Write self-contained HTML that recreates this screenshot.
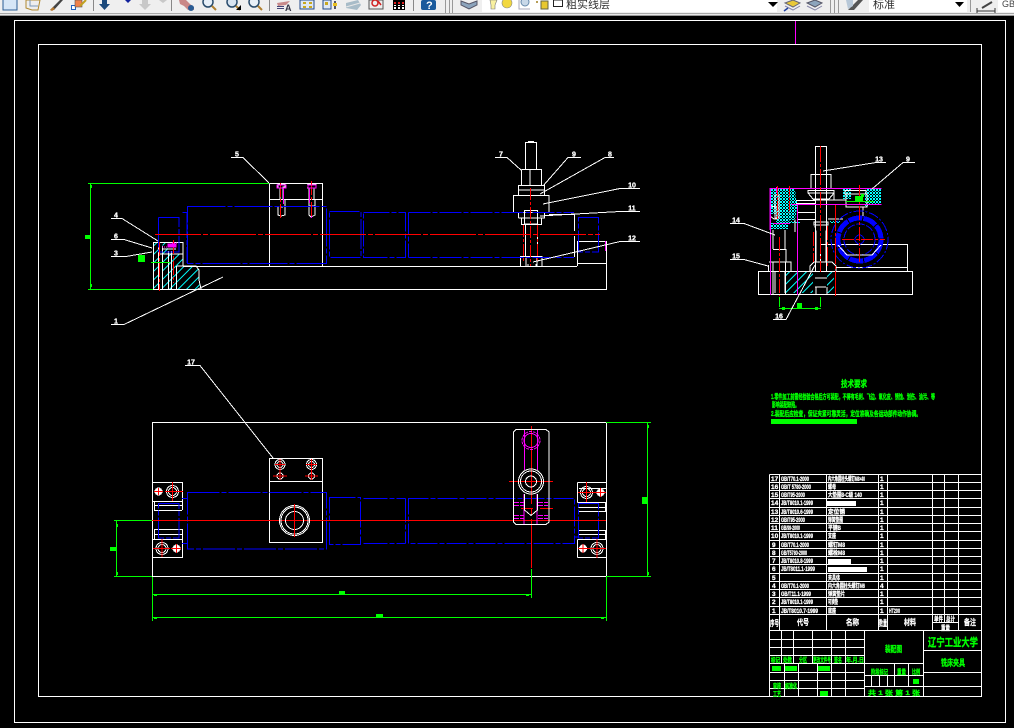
<!DOCTYPE html>
<html lang="zh">
<head>
<meta charset="utf-8">
<title>CAD</title>
<style>
html,body{margin:0;padding:0;background:#000;width:1014px;height:728px;overflow:hidden}
svg{display:block;position:absolute;left:0;top:0;shape-rendering:crispEdges}
g.t{shape-rendering:geometricPrecision}
text{font-family:"Liberation Sans","Noto Sans CJK SC",sans-serif;font-weight:700}
</style>
</head>
<body>
<svg width="1014" height="728" viewBox="0 0 1014 728" xmlns="http://www.w3.org/2000/svg">
<defs>
<pattern id="h" patternUnits="userSpaceOnUse" width="6" height="6" patternTransform="rotate(45)">
<rect width="6" height="6" fill="#000"/><rect x="0" width="1" height="6" fill="#0ff"/>
</pattern>
<pattern id="d" patternUnits="userSpaceOnUse" width="3" height="3">
<rect width="3" height="3" fill="#000"/><rect width="2" height="2" fill="#0ff"/><rect x="2" y="2" width="1" height="1" fill="#0ff"/>
</pattern>
</defs>

<!-- toolbar -->
<g class="t">
<rect x="0" y="0" width="1014" height="13" fill="#efefef"/>
<rect x="0" y="13" width="1014" height="1" fill="#a8a8a8"/>
<rect x="0" y="14" width="1014" height="1" fill="#e8e8e8"/>
<rect x="0" y="15" width="1014" height="1" fill="#9a9a9a"/>
<g shape-rendering="crispEdges">
<rect x="93" y="0" width="1" height="11" fill="#888"/><rect x="171" y="0" width="1" height="11" fill="#888"/>
<rect x="269" y="0" width="1" height="11" fill="#888"/><rect x="413" y="0" width="1" height="11" fill="#888"/>
<rect x="445" y="0" width="1" height="13" fill="#999"/><rect x="449" y="0" width="1" height="13" fill="#999"/><rect x="452" y="0" width="1" height="13" fill="#999"/>
<rect x="482" y="0" width="295" height="12" fill="#fff"/>
<rect x="869" y="0" width="98" height="12" fill="#fff"/>
<rect x="998" y="0" width="16" height="12" fill="#fff"/>
<rect x="830" y="0" width="1" height="13" fill="#999"/><rect x="834" y="0" width="1" height="13" fill="#999"/><rect x="838" y="0" width="1" height="13" fill="#999"/>
<rect x="970" y="0" width="1" height="12" fill="#999"/>
</g>
<path d="M3 0V10H17V0" fill="#d6e6f6" stroke="#2a5c94"/>
<path d="M26 0V8L32 10H38L40 0Z" fill="#eee" stroke="#b08a30"/><path d="M30 0V6H38" fill="none" stroke="#7a98b8"/>
<path d="M50 10L60 0H63L54 10Z" fill="#444"/><path d="M50 10L53 7L55 9L52 11Z" fill="#b87a30"/>
<rect x="71.500" y="5.500" width="4" height="4" fill="#fff" stroke="#2060c0"/><rect x="75" y="0" width="7" height="7" fill="#f0804a" stroke="#555" stroke-width=".6"/><path d="M80 6L86 0" stroke="#c0a020" stroke-width="2"/>
<path d="M102 0H107V4H110L104.500 10L99 4H102Z" fill="#1c4a7c"/>
<path d="M125 0H131L128 3Z" fill="#10209c"/>
<path d="M142 0H148V4H151L145 10L139 4H142Z" fill="#c8c8c8"/>
<path d="M159 0H167L163 3Z" fill="#c8c8c8"/>
<path d="M179 0H186L190 4L194 7V10H188L184 6L180 4Z" fill="#c98888"/><circle cx="191" cy="8" r="3" fill="#2a5c94"/>
<g fill="none" stroke="#2a4c6c" stroke-width="1.500"><circle cx="208" cy="2" r="5" fill="#e8f0f8"/><circle cx="232" cy="2" r="5" fill="#d8e4f0"/><circle cx="254" cy="2" r="5" fill="#e8f0f8"/></g>
<path d="M212 6L216 10M236 6L240 10M258 6L262 10" stroke="#b08030" stroke-width="2"/><path d="M236 10H241V5Z" fill="#000"/>
<path d="M277 3L290 1L286 5L278 6Z" fill="#c88a8a"/><rect x="277" y="6" width="7" height="1" fill="#447"/><rect x="277" y="8" width="7" height="1" fill="#447"/><text x="285" y="11" font-size="9" fill="#334">A</text>
<rect x="300" y="0" width="14" height="9" fill="#dfe8f4" stroke="#234a88"/><rect x="303" y="2" width="3" height="2" fill="#c8a820"/><rect x="309" y="2" width="3" height="2" fill="#c8a820"/><rect x="303" y="6" width="3" height="2" fill="#c8a820"/><rect x="309" y="6" width="3" height="2" fill="#c8a820"/>
<rect x="323" y="0" width="8" height="9" fill="#dfe8f4" stroke="#234a88"/><rect x="325" y="2" width="3" height="3" fill="#c8a820"/><path d="M335 1V9" stroke="#223" stroke-width="1.500"/><rect x="333" y="3" width="4" height="3" fill="#e8c020"/>
<path d="M346 3L358 0L361 5L357 10L346 8Z" fill="#a8bcc8"/><path d="M346 7L360 3" stroke="#e8e8e8"/>
<rect x="369" y="0" width="14" height="9" fill="#eee" stroke="#555"/><circle cx="375" cy="3" r="3" fill="none" stroke="#d02020" stroke-width="1.500"/><path d="M378 1L381 5" stroke="#d02020" stroke-width="1.500"/>
<rect x="393" y="0" width="12" height="10" fill="#000"/><g fill="#fff"><rect x="394" y="5" width="2" height="1"/><rect x="398" y="5" width="2" height="1"/><rect x="402" y="5" width="2" height="1"/><rect x="394" y="7" width="2" height="2"/><rect x="398" y="7" width="2" height="2"/><rect x="402" y="7" width="2" height="2"/></g><g fill="#e02020"><rect x="394" y="2" width="2" height="2"/><rect x="398" y="2" width="2" height="2"/><rect x="402" y="2" width="2" height="2"/></g>
<rect x="421" y="0" width="15" height="10" rx="2" fill="#1a5a9c"/><text x="426" y="9" font-size="11" fill="#fff">?</text>
<path d="M461 1L469 4L477 1L477 5L469 9L461 5Z" fill="#8ca4bc" stroke="#556"/>
<path d="M490 0H497L495 5V9H491V5Z" fill="#f8f0a0" stroke="#777" stroke-width=".6"/>
<circle cx="507" cy="3" r="5" fill="#f2d840" stroke="#888" stroke-width=".6"/>
<circle cx="525" cy="2" r="4" fill="#c8d8e8" stroke="#6688aa"/><path d="M519 0V9H530" fill="none" stroke="#aab" />
<rect x="541" y="1" width="7" height="8" fill="#e8c830" stroke="#664"/><circle cx="537" cy="2" r="1" fill="#a08020"/>
<rect x="553.500" y="0" width="9" height="6.500" fill="#fff" stroke="#222"/>
<text x="566" y="8" font-size="11" fill="#333" style="font-weight:400">粗实线层</text>
<path d="M768 2H778L773 7Z" fill="#000"/>
<path d="M785 3L793 0L800 3L793 7Z" fill="#e8c838" stroke="#667"/><path d="M785 6L793 10L800 6" fill="none" stroke="#88a" /><path d="M784 11L788 8" stroke="#2040a0" stroke-width="1.500"/>
<path d="M807 3L815 0L822 3L815 7Z" fill="#8ca4bc" stroke="#556"/><path d="M807 6L815 10L822 6" fill="none" stroke="#88a"/>
<path d="M848 10L858 0H863L854 10Z" fill="#555"/><path d="M846 0H853V6L848 9Z" fill="#b8c8d8"/>
<text x="873" y="8" font-size="11" fill="#333" style="font-weight:400">标准</text>
<path d="M955 2H964L959.500 7Z" fill="#000"/>
<path d="M977 11H995M977 8V13M995 8V13" stroke="#333" fill="none"/><path d="M982 8L992 2" stroke="#444" stroke-width="2"/>
<text x="1002" y="7" font-size="9" fill="#444" style="font-weight:400">GB</text>
</g>

<g fill="none" stroke-width="1">
<!-- frames -->
<path d="M14.500 20.500H1005.500V722.500H14.500Z" stroke="#fff"/>
<path d="M38.500 44.500H981.500V696.500H38.500Z" stroke="#fff"/>
<path d="M795.500 21V44" stroke="#f0f"/>

<!-- ========= FRONT VIEW ========= -->
<path d="M153.500 243H158V289H153.500ZM162.500 243H168V254H172V289H162.500ZM172 254H183V266H176V289H172ZM176 266H196L199 270V280L201 289H176Z" fill="url(#h)" stroke="none"/>
<g stroke="#fff">
<path d="M153 289.500H606.500V241.500H577.500V266M183 266.500H577" />
<path d="M153.500 289.500V242.500H183V266"/>
<path d="M158.500 289V246M162.500 289V246M168.500 289V251M171.500 289V251M176.500 289V266M158 254H183M162 249H176"/>
<path d="M177 266H196L199 270V280L201 289"/>
<path d="M269.500 183.500H322.500V266M269.500 183.500V266M269.500 199.500H322.500"/>
<path d="M577.500 263.500H606"/>
<path d="M278 184H285V187H283V200M278 184V188H280V200M278 207V215L281 216L285 215V200M280 207H283"/>
<path d="M307 184H316V188H314V200M307 188H309V215L311 217L315 215V200M309 206H315"/>
<path d="M525.500 169V142.500H536.500V169M528 141.500H534"/>
<path d="M521.500 169.500H541.500V186M521.500 169.500V186M530 170V186"/>
<path d="M518.500 185.500H544.500V190H518.500ZM518.500 190V195M544.500 190V195"/>
<path d="M513.500 195.500H549V212.500H513.500Z"/>
<path d="M518.500 212V218M544.500 212V218H518.500M524.500 210.500H537.500V224H524.500Z"/>
<path d="M521.500 218V224.500H541.500V218M525.500 224V256M537.500 224V256"/>
<path d="M520.500 266V256.500H542V266M526 257V266M537 257V266M528 266V264M536 266V264"/>
<path d="M549 214.500H574.500V231M574.500 236V257"/>
</g>
<g stroke="#00f" stroke-width="1">
<path d="M187.500 206.500H326.500V263.500H187.500Z" stroke-dasharray="38 2 5 2"/>
<path d="M182.500 212.500H187V263M158.500 217.500H179V252H158.500M158.500 217.500V252" stroke-dasharray="30 2 5 2"/>
<path d="M329.500 211.500H361V257.500H329.500Z" stroke-dasharray="30 2 5 2"/>
<path d="M363.500 212.500H405.500V257.500H363.500Z" stroke-dasharray="26 2 5 2"/>
<path d="M408.500 212.500H574M408.500 257.500H574M408.500 212.500V257.500" stroke-dasharray="22 2 5 2"/>
<path d="M578.500 217.500H598.500V252H578.500Z" stroke-dasharray="26 2 5 2"/>
</g>
<g stroke="#f00">
<path d="M155 234.500H600" stroke-dasharray="46 2 5 2"/>
<path d="M159.500 242V291M173.500 240V283M280.500 183V219M311.500 181V218" stroke-dasharray="14 2 3 2"/>
<path d="M530.500 188V266M523.500 225V262M537.500 225V262" stroke-dasharray="12 2 3 2"/>
</g>
<g stroke="#f0f">
<path d="M277 185H286V188H277ZM308 185H316V188H308ZM283.500 188V204M309.500 188V203M311.500 216V218M605.500 241V251"/>
<path d="M168 244H176V247H168Z" fill="#f0f"/>
<path d="M172 243H178M162 247H168" stroke-dasharray="1 1"/>
</g>
<g stroke="#0f0">
<path d="M88 183.500H269M88 289.500H153M90.500 183V290"/>
<path d="M151 262.500H170"/>
</g>
<rect x="85" y="235" width="5" height="4" fill="#0f0"/>
<rect x="138" y="255" width="7" height="7" fill="#0f0"/>
<rect x="91" y="185" width="1" height="3" fill="#0f0"/><rect x="91" y="284" width="1" height="3" fill="#0f0"/>

<!-- ========= SIDE VIEW ========= -->
<path d="M770.500 188.500H795L796 200H798L795 220L788 220L793 222H785V226H776V214H771Z" fill="url(#d)" stroke="none"/>
<path d="M843 189H851V199H843ZM868 188.500H881V204H868V207H865V190Z" fill="url(#d)" stroke="none"/>
<path d="M786 221H800V223H786ZM830 221H840V223H830ZM771 223H788V229H771Z" fill="url(#d)" stroke="none"/>
<path d="M786 271.500H813V293H786ZM827 271.500H834V293H827Z" fill="url(#h)" stroke="none"/>
<g stroke="#fff">
<path d="M758.500 271.500H912.500V294.500H758.500Z"/>
<path d="M815.500 147V271M826.500 147V271M815 146.500H827M811 174V188M831 174V188M811 174.500H831"/>
<path d="M808 190.500H834V193H808ZM808 193L813 199H829L834 193M813 200H829"/>
<path d="M796 200.500H816M796 203.500H816M827 200H834M834 192V200M834 200H846"/>
<path d="M797 212.500H815M797 219.500H815M795 219.500V232M828 219H843"/>
<path d="M814 222H828V225H814ZM815 226L816 232V262M827 226L826 232V262"/>
<path d="M770 206V216L774 219H777V207ZM775 195H779V218H775Z"/>
<path d="M773 230V249M785 230V249M773 249.500H786V262M773 262V294M785.500 262V294"/>
<path d="M768.500 265V271M769 262H791V271M775 272V293M785 272V293"/>
<path d="M810 271V266L814 262H832L836 266V271M815 278H827M815 287H826M816 294V287M827 294V287"/>
<path d="M820.500 262V244.500H907.500V271M836 267.500H907"/>
<path d="M845 190.500H866V194H845ZM846 194H867V207H846ZM863 207V216"/>
</g>
<g stroke="#f0f">
<path d="M770.500 188.500H881.500M770.500 188.500V295M791 204.500H881.500M797.500 204.500V295M773 223.500H790"/>
<path d="M770 188V230" stroke-width="1"/>
</g>
<rect x="776" y="187" width="2" height="6" fill="#f0f"/>
<g stroke="#f00">
<path d="M820.500 146V272" stroke-dasharray="16 2 3 2"/>
<path d="M777.500 186V219M789.500 186V213" stroke-dasharray="10 1 3 1"/>
<path d="M779.500 237V296" stroke-dasharray="14 2 3 2"/>
<path d="M813.500 232V262M827.500 226V266" stroke-dasharray="14 2 3 2"/>
</g>
</g>
<!-- side gear -->
<g fill="none">
<circle cx="859.500" cy="239.500" r="28.500" stroke="#00f" stroke-dasharray="10 2 2 2"/>
<circle cx="859.500" cy="239.500" r="21.500" stroke="#00f" stroke-width="5" stroke-dasharray="14 1"/>
<circle cx="859.500" cy="239.500" r="15.500" stroke="#00f" stroke-dasharray="8 2"/>
<circle cx="859.500" cy="239.500" r="4.500" stroke="#00f"/>
<path d="M838 245L847 255H872L881 245" stroke="#fff"/>
</g>
<g stroke="#f00" fill="none">
<path d="M835.500 205V296" stroke-dasharray="26 2 3 2"/>
<path d="M859.500 185V262" stroke-dasharray="14 2 3 2"/>
<path d="M842 239.500H885" stroke-dasharray="12 2 3 2"/>
</g>
<!-- green inside side view -->
<g stroke="#0f0" fill="none">
<path d="M846 201.500H874"/>
<path d="M779.500 297V307M820.500 297V307M779 308.500H821"/>
</g>
<rect x="855" y="196" width="8" height="5" fill="#0f0"/><rect x="861" y="194" width="3" height="3" fill="#0f0"/>
<rect x="797" y="303" width="5" height="5" fill="#0f0"/>
<rect x="782" y="307" width="3" height="3" fill="#0f0"/><rect x="815" y="307" width="3" height="3" fill="#0f0"/>

<g fill="none">
<!-- ========= PLAN VIEW ========= -->
<g stroke="#fff">
<path d="M152.500 422.500H606.500V576.500H152.500Z"/>
<path d="M269.500 458.500H322.500V542.500H269.500ZM269.500 481.500H322.500"/>
<path d="M152.500 482.500H182.500V501.500H152.500M152.500 557.500H182.500V539.500H152.500M154.500 501.500V510.500H182M154 505.500H182M154.500 529.500V539.500M154 529.500H182M154 534.500H182M182.500 501V510M182.500 529V540"/>
<path d="M577.500 482.500H606M577.500 502.500H606M577.500 557.500H606M577.500 539.500H606M577.500 482.500V502.500M577.500 539.500V557.500M579 488.500H606M578 507.500H606M578 511.500H606M578 530.500H606M578 534.500H606M605.500 502V511M605.500 530V539"/>
</g>
<g stroke="#00f">
<path d="M187.500 492.500H326.500V549H187.500Z" stroke-dasharray="32 2 5 2"/>
<path d="M182 498.500H187M182 543.500H187M329.500 497.500H360.500V544.500H329.500Z" stroke-dasharray="26 2 5 2"/>
<path d="M158.500 503.500H179V538H158.500Z" stroke-dasharray="26 2 5 2"/>
<path d="M363.500 498.500H405.500M363.500 543.500H405.500M405.500 498.500V543.500" stroke-dasharray="24 2 5 2"/>
<path d="M408.500 498.500H574.500V543.500H408.500Z" stroke-dasharray="20 2 5 2"/>
<path d="M578.500 503.500H598.500V538H578.500Z" stroke-dasharray="26 2 5 2"/>
<path d="M574 537H578" />
</g>
<path d="M152 520.500H606" stroke="#f00"/>
<g stroke="#f0f">
<path d="M524.500 429V470M537.500 429V470M524 494V524M537 494V524"/>
<path d="M514 502.500H524M538 502.500H548M514 505.500H524M538 505.500H548M514 515.500H524M538 515.500H548M514 518.500H524M538 518.500H548" stroke-dasharray="5 1"/>
</g>
<path d="M531.500 426V568" stroke="#f00" stroke-dasharray="78 4 7 4"/>
<path d="M509 481.500H553M521 508.500H533M540 508.500H553" stroke="#f00"/>
<path d="M516 429.500H546L549 432V522L546 524.500H516L513.500 522V432Z" stroke="#fff"/>
<path d="M524.500 494V510L531 515.500L537.500 510V494" stroke="#fff"/>
<g stroke="#0f0">
<path d="M114 520.500H152M114 576.500H152M116.500 520V577"/>
<path d="M152.500 577V621M152 594.500H531M152 617.500H606M531.500 569V598M606.500 577V621"/>
<path d="M606 422.500H651M606 576.500H651M647.500 422V577"/>
</g>
<g fill="#0f0" stroke="none">
<rect x="110" y="547" width="6" height="4"/>
<rect x="339" y="591" width="6" height="4"/>
<rect x="376" y="614" width="7" height="3"/>
<rect x="642" y="497" width="6" height="7"/>
<rect x="117" y="524" width="1" height="3"/><rect x="117" y="572" width="1" height="3"/>
<rect x="154" y="595" width="3" height="1"/><rect x="154" y="618" width="3" height="1"/>
<rect x="526" y="595" width="3" height="1"/><rect x="601" y="618" width="3" height="1"/>
<rect x="648" y="425" width="1" height="3"/><rect x="648" y="572" width="1" height="3"/>
</g>
</g>
<g fill="none" stroke="#fff">
<circle cx="294.500" cy="520.500" r="15"/><circle cx="294.500" cy="520.500" r="13.500"/><circle cx="294.500" cy="520.500" r="9"/>
<circle cx="280" cy="464.500" r="5"/><circle cx="280" cy="464.500" r="3"/><circle cx="280" cy="476" r="3"/>
<circle cx="311.500" cy="464.500" r="5"/><circle cx="311.500" cy="464.500" r="3"/><circle cx="311.500" cy="476" r="3"/>
<circle cx="172.500" cy="491.500" r="6"/><circle cx="172.500" cy="491.500" r="4"/><circle cx="158.500" cy="491.500" r="3.500" fill="#fff"/>
<circle cx="162" cy="548.500" r="6"/><circle cx="162" cy="548.500" r="4"/><circle cx="176.500" cy="548.500" r="3.500" fill="#fff"/>
<circle cx="586.500" cy="492.500" r="6"/><circle cx="586.500" cy="492.500" r="4"/><circle cx="600.500" cy="492.500" r="3.500" fill="#fff"/>
<circle cx="597" cy="548.500" r="6"/><circle cx="597" cy="548.500" r="4"/><circle cx="583" cy="548.500" r="3.500" fill="#fff"/>
<circle cx="531" cy="481.500" r="12.500"/><circle cx="531" cy="481.500" r="10.500"/><circle cx="531" cy="481.500" r="5.500"/>
</g>
<circle cx="531" cy="440.500" r="9" fill="none" stroke="#f0f" stroke-dasharray="3 1"/>
<circle cx="531" cy="440.500" r="7" fill="none" stroke="#f0f"/>
<g stroke="#f00" fill="none">
<path d="M275 464.500H285M280 459V480M273 476H287M306 464.500H317M311.500 459V480M305 476H318M294.500 504V537"/>
<path d="M165 491.500H183M172.500 482V501M154 491.500H163M158.500 488V495"/>
<path d="M153 548.500H170M162 539V557M171 548.500H181M176.500 544V553"/>
<path d="M578 492.500H606M586.500 482V502M600.500 488V497"/>
<path d="M578 548.500H606M597 539V558M583 544V553"/>
</g>

<!-- leaders -->
<g fill="none" stroke="#fff" stroke-width="1">
<path d="M231 157.500H243L269 183M111 218.500H122L158 241M111 239.500H124L152 248M111 256.500H126L152 252M111 324.500H124L223 277"/>
<path d="M495 157.500H507L521 170M581 157.500H568L543 186M614 157.500H605L540 194M640 188.500H620L543 204M640 211.500H620L540 216M640 241.500H620L533 262"/>
<path d="M886 162.500H876L823 171M915 162.500H903L872 189M730 223.500H744L775 235M730 259.500H744L768 266M773 319.500H786L815 265"/>
<path d="M185 365.500H200L273 458"/>
</g>
<g fill="#fff" stroke="#fff" stroke-width=".3" font-size="7" text-anchor="middle">
<text x="237" y="156.500">5</text><text x="116" y="217.500">4</text><text x="116" y="238.500">6</text><text x="116" y="255.500">3</text><text x="116" y="323.500">1</text>
<text x="501" y="156.500">7</text><text x="574" y="156.500">9</text><text x="610" y="156.500">8</text><text x="632" y="187.500">10</text><text x="632" y="210.500">11</text><text x="632" y="240.500">12</text>
<text x="879" y="161.500">13</text><text x="908" y="161.500">9</text><text x="736" y="222.500">14</text><text x="736" y="258.500">15</text><text x="779" y="318.500">16</text><text x="191" y="364.500">17</text>
</g>

<!-- technical requirements -->
<g fill="#0f0" stroke="#0f0" stroke-width=".35">
<text x="841" y="387" font-size="9" textLength="26" lengthAdjust="spacingAndGlyphs">技术要求</text>
<text x="771" y="399" font-size="7" textLength="164" lengthAdjust="spacingAndGlyphs">1.零件加工前需经检验合格后方可装配，不得有毛刺、飞边、氧化皮、锈蚀、划伤、油污、等</text>
<text x="772" y="407" font-size="7" textLength="27" lengthAdjust="spacingAndGlyphs">影响装配缺陷。</text>
<text x="771" y="416" font-size="7" textLength="150" lengthAdjust="spacingAndGlyphs">2.装配后应检查，保证夹紧可靠灵活，定位准确及各运动部件动作协调。</text>
</g>
<rect x="771" y="419" width="86" height="5" fill="#0f0"/>

<!-- parts table -->
<g fill="none" stroke="#fff">
<path d="M769.500 474.500H981.500M769.500 482.500H981M769.500 490.500H981M769.500 498.500H981M769.500 507.500H981M769.500 515.500H981M769.500 523.500H981M769.500 531.500H981M769.500 540.500H981M769.500 548.500H981M769.500 556.500H981M769.500 564.500H981M769.500 573.500H981M769.500 581.500H981M769.500 589.500H981M769.500 597.500H981M769.500 606.500H981M769.500 614.500H981M769.500 630.500H981"/>
<path d="M769.500 474.500V696M779.500 474.500V630M826.500 474.500V630M878.500 474.500V630M887.500 474.500V630M932.500 474.500V630M944.500 474.500V622M958.500 474.500V630M932.500 622.500H958"/>
<path d="M864.500 630V696M923.500 630V696"/>
<path d="M770 639.500H864M770 647.500H864M770 655.500H864M770 663.500H864M770 672.500H864M770 680.500H864M770 688.500H864"/>
<path d="M781.500 630V663M793.500 630V663M812.500 630V663M831.500 630V696M845.500 630V696M784.500 664V696M798.500 664V696M817.500 664V696"/>
<path d="M865 663.500H923M865 675.500H923M865 686.500H923M894.500 664V686M908.500 664V686M871.500 676V686M879.500 676V686M887.500 676V686"/>
<path d="M924 650.500H981M924 672.500H981M924 686.500H981"/>
</g>
<g fill="#fff" stroke="#fff" stroke-width=".3" font-size="6.500">
<text x="771" y="481">17</text><text x="771" y="489">16</text><text x="771" y="497">15</text><text x="771" y="505">14</text><text x="771" y="514">13</text><text x="771" y="522">12</text><text x="771" y="530">11</text><text x="771" y="538">10</text><text x="772" y="547">9</text><text x="772" y="555">8</text><text x="772" y="563">7</text><text x="772" y="571">6</text><text x="772" y="580">5</text><text x="772" y="588">4</text><text x="772" y="596">3</text><text x="772" y="604">2</text><text x="772" y="613">1</text>
<g font-size="6">
<text x="781" y="481" textLength="28" lengthAdjust="spacingAndGlyphs">GB/T70.1-2000</text>
<text x="781" y="489" textLength="30" lengthAdjust="spacingAndGlyphs">GB/T 5780-2000</text>
<text x="781" y="497" textLength="24" lengthAdjust="spacingAndGlyphs">GB/T95-2000</text>
<text x="781" y="505" textLength="32" lengthAdjust="spacingAndGlyphs">JB/T8010.1-1999</text>
<text x="781" y="514" textLength="32" lengthAdjust="spacingAndGlyphs">JB/T8010.6-1999</text>
<text x="781" y="522" textLength="24" lengthAdjust="spacingAndGlyphs">GB/T95-2000</text>
<text x="781" y="530" textLength="19" lengthAdjust="spacingAndGlyphs">GB/99-2000</text>
<text x="781" y="538" textLength="32" lengthAdjust="spacingAndGlyphs">JB/T8010.1-1999</text>
<text x="781" y="547" textLength="28" lengthAdjust="spacingAndGlyphs">GB/T70.1-2000</text>
<text x="781" y="555" textLength="26" lengthAdjust="spacingAndGlyphs">GB/T5780-2000</text>
<text x="781" y="563" textLength="32" lengthAdjust="spacingAndGlyphs">JB/T8010.8-1999</text>
<text x="781" y="571" textLength="34" lengthAdjust="spacingAndGlyphs">JB/T8011.1-1999</text>
<text x="781" y="588" textLength="28" lengthAdjust="spacingAndGlyphs">GB/T70.1-2000</text>
<text x="781" y="596" textLength="30" lengthAdjust="spacingAndGlyphs">GB/T11.1-1999</text>
<text x="781" y="604" textLength="32" lengthAdjust="spacingAndGlyphs">JB/T8010.1-1999</text>
<text x="781" y="613" textLength="37" lengthAdjust="spacingAndGlyphs">JB/T8010.7-1999</text>
<text x="828" y="481" textLength="37" lengthAdjust="spacingAndGlyphs">内六角圆柱头螺钉M8×40</text>
<text x="828" y="489" textLength="8" lengthAdjust="spacingAndGlyphs">螺母</text>
<text x="828" y="497" textLength="34" lengthAdjust="spacingAndGlyphs">大垫圈8-C级 140</text>
<text x="828" y="514" textLength="17" lengthAdjust="spacingAndGlyphs">定位销</text>
<text x="828" y="522" textLength="15" lengthAdjust="spacingAndGlyphs">弹簧垫圈</text>
<text x="828" y="530" textLength="13" lengthAdjust="spacingAndGlyphs">平键B</text>
<text x="828" y="538" textLength="8" lengthAdjust="spacingAndGlyphs">支座</text>
<text x="828" y="547" textLength="17" lengthAdjust="spacingAndGlyphs">螺钉M8</text>
<text x="828" y="555" textLength="17" lengthAdjust="spacingAndGlyphs">螺栓M8</text>
<text x="828" y="580" textLength="12" lengthAdjust="spacingAndGlyphs">夹具体</text>
<text x="828" y="588" textLength="37" lengthAdjust="spacingAndGlyphs">内六角圆柱头螺钉M6</text>
<text x="828" y="596" textLength="17" lengthAdjust="spacingAndGlyphs">弹簧垫片</text>
<text x="828" y="604" textLength="10" lengthAdjust="spacingAndGlyphs">可换垫</text>
<text x="828" y="613" textLength="8" lengthAdjust="spacingAndGlyphs">底座</text>
</g>
<text x="880" y="481">1</text><text x="880" y="489">1</text><text x="880" y="497">1</text><text x="880" y="505">1</text><text x="880" y="514">1</text><text x="880" y="522">1</text><text x="880" y="530">1</text><text x="880" y="538">1</text><text x="880" y="547">1</text><text x="880" y="555">1</text><text x="880" y="563">1</text><text x="880" y="571">1</text><text x="880" y="580">1</text><text x="880" y="588">4</text><text x="880" y="596">1</text><text x="880" y="604">1</text><text x="880" y="613">1</text>
<text x="889" y="613" textLength="11" lengthAdjust="spacingAndGlyphs">HT200</text>
<g font-size="8">
<text x="770" y="626" textLength="9" lengthAdjust="spacingAndGlyphs">序号</text>
<text x="797" y="625" textLength="12" lengthAdjust="spacingAndGlyphs">代号</text>
<text x="846" y="625" textLength="13" lengthAdjust="spacingAndGlyphs">名称</text>
<text x="879" y="626" textLength="8" lengthAdjust="spacingAndGlyphs">数量</text>
<text x="904" y="625" textLength="12" lengthAdjust="spacingAndGlyphs">材料</text>
<text x="964" y="625" textLength="12" lengthAdjust="spacingAndGlyphs">备注</text>
</g>
<g font-size="6.500">
<text x="934" y="621" textLength="9" lengthAdjust="spacingAndGlyphs">单件</text>
<text x="946" y="621" textLength="9" lengthAdjust="spacingAndGlyphs">总计</text>
<text x="941" y="630" textLength="9" lengthAdjust="spacingAndGlyphs">重量</text>
</g>
</g>
<rect x="827" y="501" width="29" height="5" fill="#fff"/>
<rect x="828" y="559" width="23" height="5" fill="#fff"/>
<rect x="828" y="567" width="39" height="5" fill="#fff"/>

<!-- title block text -->
<g fill="#0f0" stroke="#0f0" stroke-width=".35">
<text x="885" y="652" font-size="8.500" textLength="17" lengthAdjust="spacingAndGlyphs">装配图</text>
<text x="928" y="646" font-size="11" textLength="50" lengthAdjust="spacingAndGlyphs">辽宁工业大学</text>
<text x="941" y="666" font-size="9" textLength="24" lengthAdjust="spacingAndGlyphs">铣床夹具</text>
<g font-size="6.500">
<text x="771" y="662" textLength="9" lengthAdjust="spacingAndGlyphs">标记</text>
<text x="783" y="662" textLength="9" lengthAdjust="spacingAndGlyphs">处数</text>
<text x="799" y="662" textLength="8" lengthAdjust="spacingAndGlyphs">分区</text>
<text x="813" y="662" textLength="18" lengthAdjust="spacingAndGlyphs">更改文件号</text>
<text x="834" y="662" textLength="8" lengthAdjust="spacingAndGlyphs">签名</text>
<text x="846" y="662" textLength="18" lengthAdjust="spacingAndGlyphs">年.月.日</text>
<text x="773" y="688" textLength="8" lengthAdjust="spacingAndGlyphs">审核</text>
<text x="785" y="688" textLength="12" lengthAdjust="spacingAndGlyphs">标准化</text>
<text x="773" y="696" textLength="8" lengthAdjust="spacingAndGlyphs">工艺</text>
<text x="871" y="674" textLength="17" lengthAdjust="spacingAndGlyphs">阶段标记</text>
<text x="897" y="674" textLength="9" lengthAdjust="spacingAndGlyphs">重量</text>
<text x="912" y="674" textLength="8" lengthAdjust="spacingAndGlyphs">比例</text>
<text x="868" y="695" textLength="52" lengthAdjust="spacingAndGlyphs">共 1 张 第 1 张</text>
</g>
</g>
<g fill="#0f0">
<rect x="772" y="666" width="9" height="5"/><rect x="785" y="666" width="12" height="5"/>
<rect x="818" y="666" width="12" height="5"/><rect x="820" y="691" width="8" height="5"/>
<rect x="913" y="679" width="6" height="5"/>
</g>
</svg>
</body>
</html>
